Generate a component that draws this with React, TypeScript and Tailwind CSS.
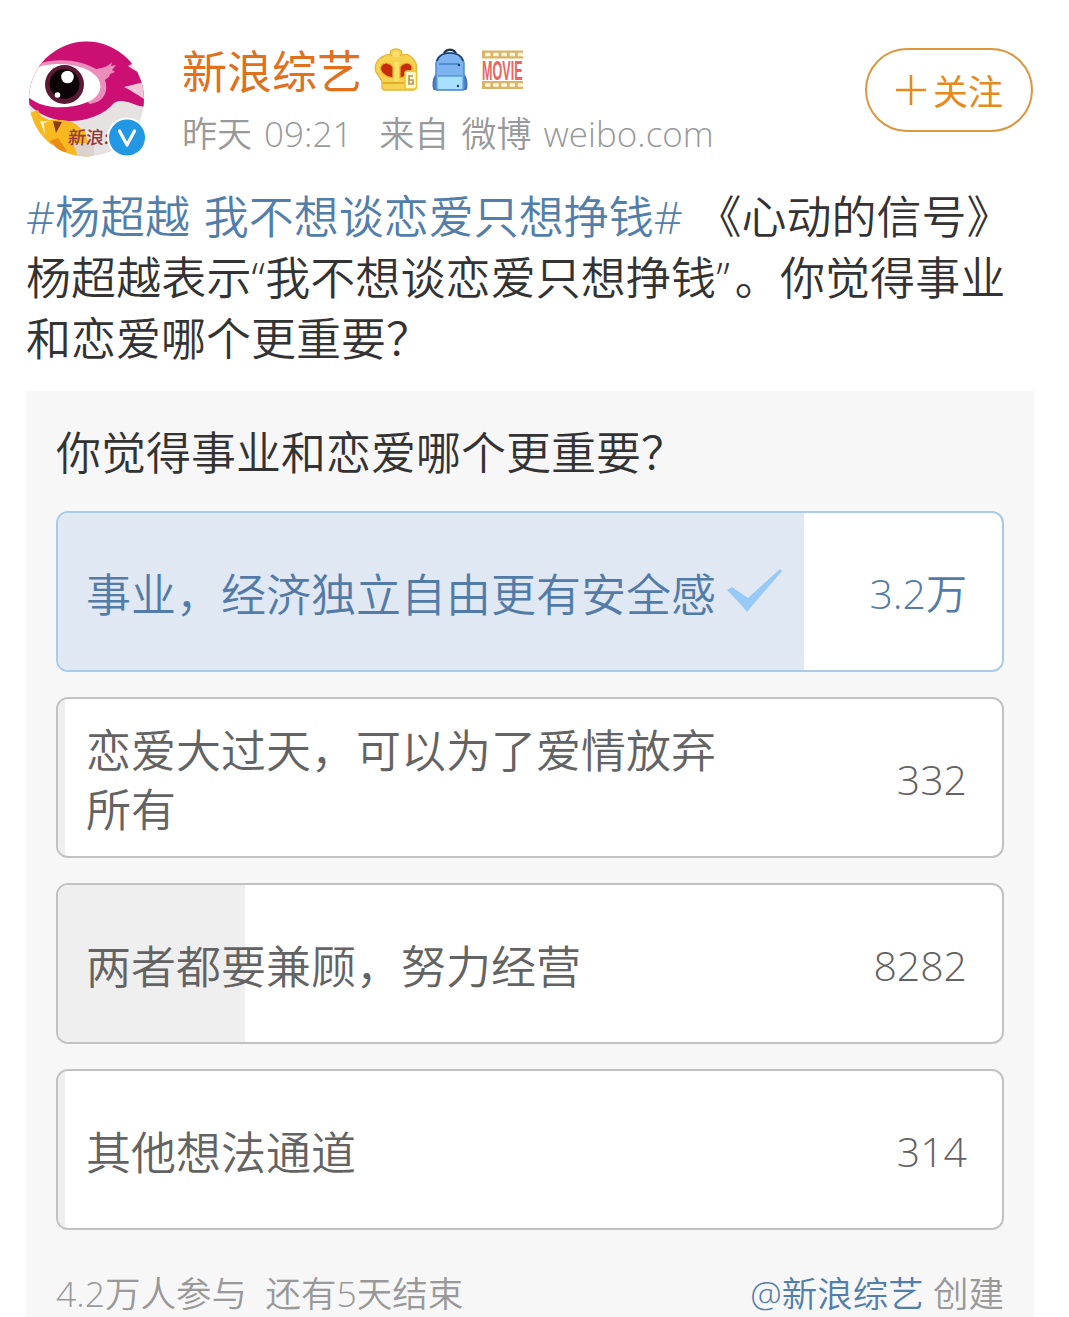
import React from 'react';
import { clsx } from 'clsx';

interface PollOption {
  id: number;
  label: string;
  votes: string;
  fill: number;
  voted?: boolean;
}

const options: PollOption[] = [
  { id: 1, label: '事业，经济独立自由更有安全感', votes: '3.2万', fill: 79, voted: true },
  { id: 2, label: '恋爱大过天，可以为了爱情放弃所有', votes: '332', fill: 0.7 },
  { id: 3, label: '两者都要兼顾，努力经营', votes: '8282', fill: 19.8 },
  { id: 4, label: '其他想法通道', votes: '314', fill: 0.7 },
];

// Latin letters, digits and quotes are set lighter than the Chinese text
function Mixed({ text }: { text: string }) {
  return (
    <>
      {text.split(/([\x20-\x7e“”]+)/).map((part, idx) =>
        idx % 2 ? <span key={idx} className="font-light">{part}</span> : part,
      )}
    </>
  );
}

function Avatar() {
  return (
    <svg viewBox="0 0 120 120" className="h-[120px] w-[120px] shrink-0">
      <defs>
        <clipPath id="avatar">
          <circle cx="58.500" cy="58" r="57.500" />
        </clipPath>
      </defs>
      <g clipPath="url(#avatar)">
        <rect width="120" height="120" fill="#e6e2e1" />
        <path d="M0 0H120V25L104 23L100 25L106 29L120 36V66C112 66 106 63 100 61C94 60 91 59 86 62C76 74 58 80 42 80C24 80 8 72 0 62Z" fill="#cb0f73" />
        <path d="M96 46L120 40V60C113 57 105 50 96 46Z" fill="#f3c5d8" />
        <path d="M8 24C28 16 52 19 68 28C76 27 80 25 84 21L83 25L88 24L84 29L87 31L82 33C82 36 79 37 77 39C80 47 78 57 69 61L62 63L58 60C67 55 70 47 66 40C56 27 35 22 8 26Z" fill="#ec8dbb" />
        <path d="M0 30C22 18 58 22 69 36C77 47 70 58 57 62C38 69 14 68 0 56Z" fill="#fff" />
        <circle cx="36.5" cy="43.5" r="19.5" fill="#5a1a36" />
        <circle cx="36.5" cy="43" r="15" fill="#0b0306" />
        <circle cx="39.500" cy="36" r="6.3" fill="#fff" />
        <circle cx="29.500" cy="54" r="2.8" fill="#fff" />
        <path d="M2 72L10 69L13 75L21 79L28 79C38 79 46 80 51 86L57 90L64 116H36L28 103L20 104L12 99L6 84Z" fill="#f8b81f" />
        <path d="M12 80L17 94L16 82L22 80Z" fill="#fff1c6" />
        <path d="M25 80L34 81L28 92Z" fill="#8a3c12" />
        <path d="M22 100L30 97L39 110L34 113Z" fill="#e98c13" />
        <path d="M45 102L66 102V116H50Z" fill="#dcd3cf" />
        <text x="39.500" y="103" fontSize="18" fontWeight="500" transform="skewX(-5) translate(9 0)" fill="#92383a" className="font-['Noto_Sans_CJK_SC',sans-serif]">新浪:</text>
      </g>
      <circle cx="99" cy="96.500" r="20" fill="#fff" />
      <circle cx="99" cy="96.500" r="18" fill="#2297e3" />
      <path d="M91.500 90L99 104L106.500 90" fill="none" stroke="#fff" strokeWidth="3.200" strokeLinecap="round" strokeLinejoin="round" />
    </svg>
  );
}

function CrownIcon() {
  return (
    <svg viewBox="0 0 44 44" className="h-11 w-11">
      <path d="M8 39V33L2 24C0 17 3 11 10 8C13 6 15 6 17 7C15 3 18 1 22 1S29 3 27 7C31 6 34 6 36 8C41 11 44 17 42 24V39Q42 42 39 42H11Q8 42 8 39Z" fill="#f6d250" stroke="#e2b93a" strokeWidth="1.400" />
      <circle cx="22" cy="6" r="3.500" fill="#fbdc6a" />
      <path d="M19 30C10 29 5 23 7 18C10 13 17 15 19 19Z" fill="#c62b0c" stroke="#f2b32c" strokeWidth="1.200" />
      <path d="M26 30V19C28 15 35 13 38 18C39 22 36 28 26 30Z" fill="#c62b0c" stroke="#f2b32c" strokeWidth="1.200" />
      <path d="M20 14H25V33H20Z" fill="#fbe066" />
      <path d="M9 35H31" stroke="#dca424" strokeWidth="1.600" />
      <rect x="31" y="23" width="11.500" height="18" rx="2" fill="#fff8d2" stroke="#ecc52e" strokeWidth="1.600" />
      <path d="M39 28H35V36H39V32H35" fill="none" stroke="#b49652" strokeWidth="1.600" />
    </svg>
  );
}

function BackpackIcon() {
  return (
    <svg viewBox="0 0 36 44" className="h-11 w-9">
      <path d="M12 7C12 0 24 0 24 7" fill="none" stroke="#24364d" strokeWidth="2.400" />
      <path d="M4 27C1 31 1 38 2 41L6 42M32 27C35 31 35 38 34 41L30 42" fill="#4f8bd2" stroke="#416ba7" strokeWidth="1.800" />
      <path d="M4 41V15C5 8 9 5 18 5S31 8 32 15V41Q32 42 29 42H7Q4 42 4 41Z" fill="#7db4f0" stroke="#4987cf" strokeWidth="1.400" />
      <path d="M5 13C7 7 11 5 18 5S29 7 31 13" fill="none" stroke="#233d66" strokeWidth="1.600" />
      <path d="M7 16H27" stroke="#316fb8" strokeWidth="1.200" />
      <rect x="6" y="28" width="24" height="13" rx="1.500" fill="#a8e0ff" />
      <path d="M6 28H30" stroke="#4689d0" strokeWidth="1.200" />
      <circle cx="27" cy="17" r="1.200" fill="#173d71" />
      <circle cx="26" cy="38" r="1.200" fill="#173d71" />
    </svg>
  );
}

function MovieIcon() {
  return (
    <svg viewBox="0 0 46 40" className="h-10 w-[46px]">
      <rect width="41" height="8" y="0.500" fill="#d9b468" />
      <rect width="41" height="8" y="31" fill="#d9b468" />
      <path d="M3 4.500H41M3 35H41" stroke="#fff6d9" strokeWidth="3.600" strokeDasharray="5.500 2.700" />
      <text transform="translate(0 30) scale(0.45 1)" fontSize="28" fontWeight="700" fill="#e96660" className="font-['Liberation_Sans',sans-serif]">MOVIE</text>
    </svg>
  );
}

function PollRow({ option }: { option: PollOption }) {
  const { label, votes, fill, voted } = option;

  return (
    <div
      className={clsx(
        'relative flex h-[161px] items-center justify-between overflow-hidden rounded-xl border-2 bg-white pl-7 pr-[35px]',
        voted ? 'border-[#a9cbe6] text-[#537ba8]' : 'border-[#c2c2c2] text-[#636363]',
      )}
    >
      {/* Share of the votes */}
      <div
        className={clsx('absolute inset-y-0 left-0', voted ? 'bg-[#e0e8f3]' : 'bg-[#efefef]')}
        style={{ width: `${fill}%` }}
      />
      <div className="relative flex items-center gap-[9px] pt-[5px]">
        <p className="w-[632px] text-[45px] leading-[59px]">{label}</p>
        {voted && (
          <svg viewBox="0 0 55 43" className="-mt-2 h-[43px] w-[55px]">
            <path d="M0 21L5 18L21 29L53 0L55 2L24 38L20 43L16 38Z" fill="#98caf7" />
          </svg>
        )}
      </div>
      <span className="relative pt-1 text-[41px]"><Mixed text={votes} /></span>
    </div>
  );
}

export default function App() {
  return (
    <div className="h-[1317px] w-[1069px] overflow-hidden bg-white font-['Open_Sans','Noto_Sans_CJK_SC',sans-serif] font-[350]">
      <header className="flex items-start pl-7 pr-9 pt-[41px]">
        <Avatar />
        <div className="ml-[34px] flex-1">
          <div className="flex h-[62px] items-center">
            <h1 className="text-[45px] leading-[62px] font-normal text-[#e0701c]">新浪综艺</h1>
            <div className="-mt-1 ml-3 flex items-center">
              <CrownIcon />
              <div className="ml-[14px]"><BackpackIcon /></div>
              <div className="ml-[14px]"><MovieIcon /></div>
            </div>
          </div>
          <p className="flex gap-[27px] text-[35px] leading-[62px] text-[#999] [word-spacing:3px]">
            <span><Mixed text="昨天 09:21" /></span>
            <span><Mixed text="来自 微博 weibo.com" /></span>
          </p>
        </div>
        <button className="mt-[7px] flex h-[84px] w-[168px] items-center justify-center gap-1.5 rounded-full border-2 border-[#dc983f] pt-1 text-[35px] font-normal text-[#e68a1c]">
          <svg viewBox="0 0 32 32" className="-mt-1 h-8 w-8">
            <path d="M16 1V31M1 16H31" stroke="currentColor" strokeWidth="2.600" />
          </svg>
          关注
        </button>
      </header>

      <div className="mt-[21px] whitespace-nowrap pl-[26px] text-[45px] leading-[61px] text-[#333] [word-spacing:2px]">
        <p>
          <span className="text-[#527eab]"><Mixed text="#杨超越 我不想谈恋爱只想挣钱#" /></span> 《心动的信号》
        </p>
        <p className="tracking-[0.1px]">
          <Mixed text="杨超越表示“我不想谈恋爱只想挣钱”" />
          <span className="ml-[5px]">。你觉得事业</span>
        </p>
        <p>和恋爱哪个更重要？</p>
      </div>

      <section className="ml-[26px] mt-[22px] h-[926px] w-[1008px] bg-[#f7f7f7] px-[30px] pt-[31px]">
        <h2 className="text-[45px] leading-[61px] text-[#333]">你觉得事业和恋爱哪个更重要？</h2>
        <div className="mt-7 flex flex-col gap-[25px]">
          {options.map((option) => (
            <PollRow key={option.id} option={option} />
          ))}
        </div>
        <footer className="mt-[43px] flex justify-between text-[35.5px] leading-10 text-[#999]">
          <span className="whitespace-pre"><Mixed text="4.2万人参与  还有5天结束" /></span>
          <span><span className="text-[#527eab]"><Mixed text="@新浪综艺" /></span><Mixed text=" 创建" /></span>
        </footer>
      </section>
    </div>
  );
}
